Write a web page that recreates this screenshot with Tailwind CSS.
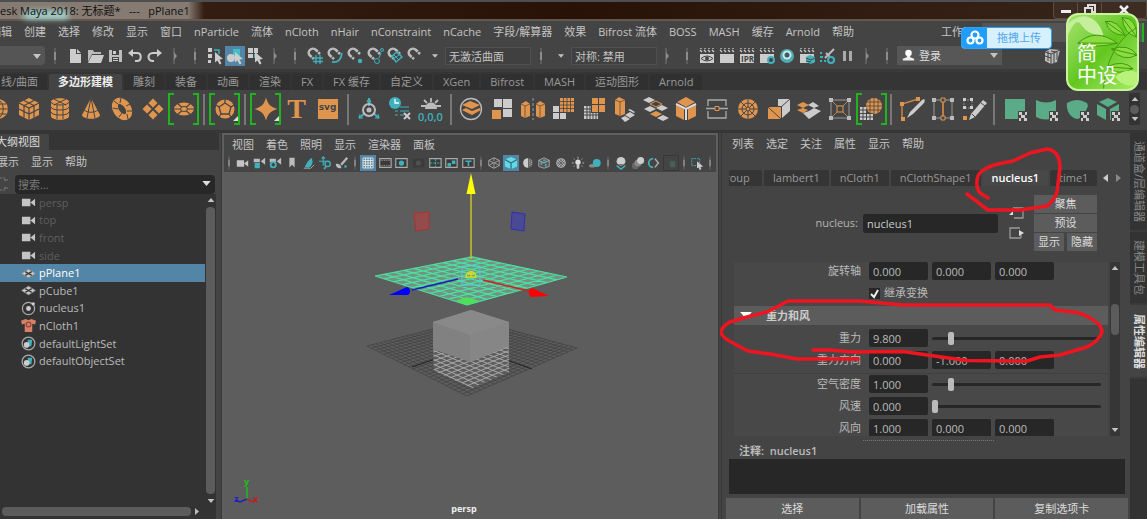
<!DOCTYPE html>
<html lang="zh-CN">
<head>
    <meta charset="UTF-8">
    <meta name="viewport" content="width=device-width, initial-scale=1.0">
    <title>Autodesk Maya 2018: 无标题* --- pPlane1</title>
    <script src="https://cdn.jsdelivr.net/npm/@tailwindcss/browser@4"></script>
</head>
<body class="flex h-screen flex-col overflow-hidden bg-[#444] font-['Open_Sans','Noto_Sans_CJK_SC',sans-serif] text-[11px] leading-4 text-[#c4c4c4]">

    <!-- Icon sprite -->
    <svg class="hidden" aria-hidden="true">
        <defs>
            <!-- status line, 20x20 -->
            <symbol id="sep" viewBox="0 0 8 20"><path d="M4 2v16" stroke="#666" stroke-width="1.5"/><path d="M4 6v8" stroke="#8c8c8c" stroke-width="2"/></symbol>
            <symbol id="sepR" viewBox="0 0 8 20"><path d="M3 2v16" stroke="#666" stroke-width="1.5"/><path d="M3 6l3 4-3 4z" fill="#8c8c8c"/></symbol>
            <symbol id="down" viewBox="0 0 10 6"><path d="M0 0h10L5 6z" fill="currentColor"/></symbol>
            <symbol id="new" viewBox="0 0 20 20"><path d="M5 3h6v5h5v9H5z" fill="#ccc"/><path d="M12 3l4 4h-4z" fill="#ccc"/></symbol>
            <symbol id="open" viewBox="0 0 20 20"><path d="M3 16V4h5l1 2h7v2H7z" fill="#bbb"/><path d="M7 9h12l-3 8H3z" fill="#ccc"/></symbol>
            <symbol id="save" viewBox="0 0 20 20"><path d="M4 4h13v12H4z" fill="#bdbdbd"/><path d="M7 4h7v5H7zM7 11h7v5H7z" fill="#444"/><path d="M8 5h3v3H8zM8 12h5v1H8zM8 14h5v1H8z" fill="#ccc"/></symbol>
            <symbol id="undo" viewBox="0 0 20 20"><path d="M4 7h8c5 0 5 8 0 8h-2" fill="none" stroke="#ccc" stroke-width="2"/><path d="M8 3v8L3 7z" fill="#ccc"/></symbol>
            <symbol id="redo" viewBox="0 0 20 20"><path d="M15 7H8c-6 0-6 8 0 8h1" fill="none" stroke="#ccc" stroke-width="2"/><path d="M12 3v8l5-4z" fill="#ccc"/></symbol>
            <symbol id="cursor" viewBox="0 0 20 20"><path d="M10 6l8 7-3.500.5 2 4-2 1-2-4-2.500 2z" fill="#ccc"/></symbol>
            <symbol id="selH" viewBox="0 0 20 20"><path d="M3 2h4v4H3zM3 8h4v4H3zM3 14h3v3H3z" fill="#ccc"/><path d="M9 4h5v4" fill="none" stroke="#3fb1bd" stroke-width="1.500"/><use href="#cursor"/></symbol>
            <symbol id="selO" viewBox="0 0 20 20"><path d="M8 3h7v8H8z" fill="#3fc0c9"/><circle cx="6" cy="12" r="4" fill="#ccc"/><use href="#cursor"/></symbol>
            <symbol id="selC" viewBox="0 0 20 20"><path d="M3 2h5v5H3zM9 2h4v5H9zM3 8h5v4H3z" fill="#ccc"/><path d="M9 8h4v4H9z" fill="#3fb1bd"/><use href="#cursor"/></symbol>
            <symbol id="magnet" viewBox="0 0 20 20"><path d="M9 13L5 9.500C1 6 7 0 11 4l4 4" fill="none" stroke="#bbb" stroke-width="2.500"/><path d="M6 12.500l2.500-3M11.500 7l3-2" stroke="#444" stroke-width="1"/></symbol>
            <symbol id="magGrid" viewBox="0 0 20 20"><use href="#magnet"/><path d="M11 9v9M15 9v9M8 12h10M8 15.500h10" stroke="#3fb1bd" stroke-width="1.300"/></symbol>
            <symbol id="magCurve" viewBox="0 0 20 20"><use href="#magnet"/><path d="M7 16c7 1 9-3 10-9" fill="none" stroke="#3fb1bd" stroke-width="1.800"/></symbol>
            <symbol id="magDot" viewBox="0 0 20 20"><use href="#magnet"/><circle cx="15" cy="15" r="2.200" fill="#3fb1bd"/></symbol>
            <symbol id="magCir" viewBox="0 0 20 20"><use href="#magnet"/><g fill="none" stroke="#3fb1bd"><circle cx="12" cy="15" r="2.500"/><circle cx="17" cy="4" r="1.500"/><path d="M14 12l2-5"/></g></symbol>
            <symbol id="magPlane" viewBox="0 0 20 20"><use href="#magnet"/><path d="M7 10l5-4 5 5-6 5z" fill="none" stroke="#3fb1bd" stroke-width="1.500"/><path d="M9 9l5 5M8 13l6-4" stroke="#3fb1bd"/></symbol>
            <symbol id="clap" viewBox="0 0 20 20"><path d="M3 8h14v9H3z" fill="#ccc"/><path d="M3 4l2 2M7 4l2 2M11 4l2 2M15 4l2 2M4 2v1M8 2v1M12 2v1M16 2v1" stroke="#ccc" stroke-width="1.300"/></symbol>
            <symbol id="clapEye" viewBox="0 0 20 20"><use href="#clap"/><path d="M4 12.500q6-5 12 0q-6 5-12 0z" fill="none" stroke="#444"/><circle cx="10" cy="12.500" r="2" fill="#444"/></symbol>
            <symbol id="clapGear" viewBox="0 0 20 20"><use href="#clap"/><circle cx="14" cy="14" r="3" fill="#444" stroke="#3fb1bd" stroke-width="2"/></symbol>
            <symbol id="clapLay" viewBox="0 0 20 20"><use href="#clap"/><path d="M9 11l4-2 5 2v5l-4 2-5-2z" fill="#3fb1bd"/><path d="M9 12l5 2 4-2M9 15l5 1" stroke="#444" fill="none"/></symbol>
            <symbol id="ring" viewBox="0 0 20 20"><circle cx="10" cy="10" r="7" fill="#4fa9b3"/><circle cx="10" cy="9" r="4.500" fill="#cfe6e8"/><circle cx="10" cy="9" r="2.500" fill="#2f5f66"/></symbol>
            <symbol id="hyper" viewBox="0 0 20 20"><path d="M8 12l9-9M9 7l4 4" stroke="#bbb" stroke-width="2"/><circle cx="14" cy="14" r="3" fill="none" stroke="#3fb1bd" stroke-width="2"/><path d="M3 7h2M3 11h3M3 15h2M7 15h2" stroke="#3fb1bd" stroke-width="2"/></symbol>
            <symbol id="pause" viewBox="0 0 20 20"><path d="M6 5h3v10H6zM12 5h3v10h-3z" fill="#aaa"/></symbol>
            <symbol id="user" viewBox="0 0 16 16"><circle cx="8" cy="5" r="4" fill="#fff"/><path d="M6 8h4v2l5 2v2H1v-2l5-2z" fill="#eee"/></symbol>
            <symbol id="modkit" viewBox="0 0 20 20"><path d="M3 6l5-3 10 1-3 12-6 2-6-3z" fill="#bbb"/><path d="M3 6l6 2v10M9 8l9-4M3 10l6 2M6 5v10M12 7v10M15 6v8M9 5l5 1" stroke="#444" stroke-width="1" fill="none"/></symbol>

            <!-- shelf, 28x28 -->
            <symbol id="sphere" viewBox="0 0 28 28"><circle cx="14" cy="14" r="10" fill="#e0954f"/><path d="M4 14h20M6 9h16M6 19h16M14 4v20M14 4c-7 5-7 15 0 20M14 4c7 5 7 15 0 20" fill="none" stroke="#444"/></symbol>
            <symbol id="cube" viewBox="0 0 28 28"><path d="M14 3l10 5v12l-10 5-10-5V8z" fill="#e0954f"/><path d="M4 8l10 5 10-5M14 13v12M4 14l10 5 10-5M9 5.500l10 5v12M19 5.500l-10 5v12" fill="none" stroke="#444" stroke-width="1.200"/></symbol>
            <symbol id="cyl" viewBox="0 0 28 28"><path d="M5 7c0-5 18-5 18 0v14c0 5-18 5-18 0z" fill="#e0954f"/><path d="M5 7c0 4 18 4 18 0M5 12c0 4 18 4 18 0M5 17c0 4 18 4 18 0M11 10v14M17 10v14M8 4l12 6M20 4L8 10" fill="none" stroke="#444"/></symbol>
            <symbol id="cone" viewBox="0 0 28 28"><path d="M14 3l9 17c-1 5-17 5-18 0z" fill="#e0954f"/><path d="M14 3l-4 20M14 3l4 20M7 15c4 3 10 3 14 0" fill="none" stroke="#444"/></symbol>
            <symbol id="torus" viewBox="0 0 28 28"><ellipse cx="14" cy="14" rx="6" ry="9" transform="rotate(-35 14 14)" fill="none" stroke="#e0954f" stroke-width="6"/><path d="M6 6l4 3M13 3l-1 5M5 13l5 1M22 9l-4 2M11 22l3-4M20 24l-1-5M24 16l-5 0" stroke="#444"/></symbol>
            <symbol id="plane" viewBox="0 0 28 28"><path d="M14 3.500L24.500 14 14 24.500 3.500 14z" fill="#e0954f"/><path d="M8.500 8.500l11 11M19.500 8.500l-11 11" stroke="#444" stroke-width="1.800"/></symbol>
            <symbol id="disc" viewBox="0 0 28 28"><ellipse cx="14" cy="14" rx="10" ry="6.500" fill="#e0954f"/><path d="M4 14h20M8 9l12 10M20 9L8 19" stroke="#444" stroke-width="1.200"/><ellipse cx="14" cy="14" rx="3.500" ry="2.500" fill="#e0954f" stroke="#444"/></symbol>
            <symbol id="soccer" viewBox="0 0 28 28"><circle cx="14" cy="14" r="9.500" fill="#e0954f"/><path d="M14 8l6 4-2 7h-8l-2-7zM14 8V4M20 12l3-2M18 19l2 3M10 19l-2 3M8 12l-3-2" fill="none" stroke="#444" stroke-width="1.300"/></symbol>
            <symbol id="corner" viewBox="0 0 28 28"><path d="M27 21v5h-5z" fill="#ddd"/></symbol>
            <symbol id="star" viewBox="0 0 28 28"><path d="M14 2.500c2 7 4.500 9.500 11.500 11.500-7 2-9.500 4.500-11.500 11.500C12 18.500 9.500 16 2.500 14 9.500 12 12 9.500 14 2.500z" fill="#e0954f"/></symbol>
            <symbol id="rig" viewBox="0 0 28 28"><path d="M14 3v8M10 18l-6 5M18 18l6 5" stroke="#3fb1bd" stroke-width="2"/><path d="M14 3l-2 4h4zM4 23l1-4M4 23h4M24 23l-1-4M24 23h-4" fill="#3fb1bd" stroke="#3fb1bd"/><circle cx="14" cy="15" r="6" fill="none" stroke="#bbb" stroke-width="2"/><circle cx="14" cy="15" r="2.500" fill="#bbb"/></symbol>
            <symbol id="hist" viewBox="0 0 28 28"><circle cx="9" cy="8" r="6" fill="#3fb1bd"/><path d="M9 4v4h4" stroke="#fff" fill="none" stroke-width="1.300"/><path d="M14 12h9M9 16h3M14 16h9M9 20h3M14 20h4" stroke="#3fb1bd" stroke-width="1.200"/><path d="M18 18l6 6M24 18l-6 6" stroke="#ccc" stroke-width="2"/></symbol>
            <symbol id="freeze" viewBox="0 0 28 28"><path d="M9 13c0-6 10-6 10 0zM14 3v4M7 5l3 3M21 5l-3 3M4 11h5M24 11h-5" fill="#bbb" stroke="#bbb" stroke-width="1.800"/></symbol>
            <symbol id="combine" viewBox="0 0 28 28"><circle cx="14" cy="14" r="10.500" fill="none" stroke="#bbb" stroke-width="1.300"/><path d="M5 10l8-4 10 4-8 4zM5 15l4-2 6 3 8-3 1 2-9 5z" fill="#e0954f"/></symbol>
            <symbol id="separate" viewBox="0 0 28 28"><path d="M6 4h8v8H6zM15 4h9v9h-9zM15 14h9v8h-9z" fill="#ccc"/><path d="M4 15h9v9H4z" fill="#e0954f"/></symbol>
            <symbol id="mirror" viewBox="0 0 28 28"><path d="M2 9l5-3 4 3v12l-5 2-4-2zM17 9l4-3 5 3v12l-5 2-4-2z" fill="#e0954f"/><path d="M2 9l4 2 5-2M6 11v12M17 9l4 2 5-2M21 11v12" fill="none" stroke="#7a5a3a"/><path d="M14 3v22" stroke="#999" stroke-dasharray="3 2"/></symbol>
            <symbol id="smooth" viewBox="0 0 28 28"><path d="M11 3h14v14H11z" fill="#e0954f"/><path d="M14.500 3v14M18 3v14M21.500 3v14M11 6.500h14M11 10h14M11 13.500h14" stroke="#444" stroke-width=".8"/><path d="M4 11h6v6H4zM4 18h6v6H4zM11 18h6v6h-6z" fill="#ccc"/></symbol>
            <symbol id="reduce" viewBox="0 0 28 28"><path d="M12 3h6v6h-6zM19 3h6v6h-6zM19 10h6v7h-6zM12 10h6v7h-6z" fill="#e0954f"/><path d="M4 11h7v7h7v6H4z" fill="#ccc"/><path d="M7 11v13M10 11v13M13 18v6M16 18v6M4 14h7M4 17h7M4 20h14" stroke="#444"/></symbol>
            <symbol id="extrude" viewBox="0 0 28 28"><path d="M4 5l4-3 6 3v14l-5 2-5-2z" fill="#e0954f"/><path d="M4 5l5 2 5-2M9 7v14" fill="none" stroke="#7a5a3a"/><path d="M14 20l5-3 5 3-5 3zM10 23l4-2 5 3-5 3z M17 15l2-1 5 3-1 1z" fill="#ccc"/></symbol>
            <symbol id="bridge" viewBox="0 0 28 28"><path d="M1 5l6-3 6 3-6 3zM14 13l6-3 6 3-6 3zM2 14l6-3 6 3-6 3zM15 23l6-3 6 3-6 3z" fill="#ccc"/><path d="M8 9l6-3 6 3-6 3z" fill="none" stroke="#e0954f"/><path d="M8 19l6-3 6 3-6 3z" fill="#e0954f"/></symbol>
            <symbol id="bevel" viewBox="0 0 28 28"><path d="M14 2l9 5-9 5-9-5zM4 10l8 4v11l-8-4zM24 10l-8 4v11l8-4z" fill="#e0954f"/><path d="M4 9l10 5 10-5M14 14v11" fill="none" stroke="#ddd" stroke-width="2"/></symbol>
            <symbol id="cut" viewBox="0 0 28 28"><path d="M5 11V5h18v6M5 16v7h18v-7M3 13.500h22" fill="none" stroke="#aaa" stroke-width="1.300"/><path d="M12 11.500h4v4h-4z" fill="#444" stroke="#e0954f"/></symbol>
            <symbol id="wheel" viewBox="0 0 28 28"><circle cx="14" cy="14" r="10" fill="#e0954f"/><path d="M14 4v20M4 14h20M7 7l14 14M21 7L7 21" stroke="#444"/><circle cx="14" cy="14" r="6" fill="none" stroke="#444"/><circle cx="14" cy="14" r="2" fill="#e0954f" stroke="#444"/></symbol>
            <symbol id="tri" viewBox="0 0 28 28"><path d="M13 4h12v12l-8 7V11H13z" fill="#ccc"/><path d="M3 12h13v12H3z" fill="#e0954f"/><path d="M3 12l13 12M16 12l9-8" stroke="#444"/></symbol>
            <symbol id="quad" viewBox="0 0 28 28"><path d="M2 10l6-3 6 3-6 3zM2 15l6-2 5 2-5 3z" fill="#e0954f"/><path d="M13 10l5-3 6 4-5 2zM14 16l5-3 7 3-6 4zM8 18l6-2 6 4-6 4z" fill="#ccc"/></symbol>
            <symbol id="lattice" viewBox="0 0 28 28"><path d="M5 5h18v18H5z" fill="none" stroke="#999"/><path d="M6 6l16 16M22 6L6 22" stroke="#b98450"/><path d="M11 11h6v6h-6z" fill="#444" stroke="#e0954f"/><path d="M3 3h4v4H3zM21 3h4v4h-4zM3 21h4v4H3zM21 21h4v4h-4z" fill="#bbb"/></symbol>
            <symbol id="remesh" viewBox="0 0 28 28"><circle cx="17" cy="11" r="8" fill="#e0954f"/><path d="M17 3v16M9 11h16M13 4v14M21 4v14M10 7h14M10 15h14" stroke="#444" stroke-width=".8"/><path d="M3 12h6v6h7v7H3z" fill="#ccc"/><path d="M6 12v13M9.500 14v11M13 18v7M3 15h6M3 18.500h13M3 22h13" stroke="#444"/></symbol>
            <symbol id="knife" viewBox="0 0 28 28"><path d="M4 24V9l16-5" fill="none" stroke="#c8884a" stroke-width="1.400"/><path d="M2 7h4v4H2zM18 2h4v4h-4zM3 22h4v4H3z" fill="#e0954f"/><path d="M26 4c1 1 1 2 0 4L15 19l-6 4 3-6L24 5z" fill="#ccc"/></symbol>
            <symbol id="loop" viewBox="0 0 28 28"><path d="M5 5h18v18H5z" fill="none" stroke="#999"/><path d="M14 4v20" stroke="#e0954f" stroke-width="1.500"/><path d="M3 3h4v4H3zM21 3h4v4h-4zM3 21h4v4H3zM21 21h4v4h-4z" fill="#bbb"/><path d="M12 3h4v4h-4zM12 21h4v4h-4z" fill="#444" stroke="#e0954f"/></symbol>
            <symbol id="pencil" viewBox="0 0 28 28"><path d="M4 5h8v8H4z" fill="none" stroke="#888" stroke-dasharray="2 1"/><path d="M3 3h3v3H3zM10 3h3v3h-3zM3 11h3v3H3zM10 11h3v3h-3z" fill="#ccc"/><path d="M3 21h4v4H3z" fill="#e0954f"/><path d="M23 5l4 3-12 14-6 3 2-6z" fill="#ccc"/><path d="M21 8l4 3M12 19l3 3" stroke="#444"/></symbol>
            <symbol id="chk" viewBox="0 0 28 28"><path d="M17 16h9v10h-9z" fill="#444"/><path d="M18 17h3v3h3v-3h2v3h-2v3h2v3h-3v-3h-3v3h-2v-3h2v-3h-2v-3z" fill="#ccc"/></symbol>
            <symbol id="uvP" viewBox="0 0 28 28"><path d="M4 4h20v20H4z" fill="#5bab88"/><use href="#chk"/></symbol>
            <symbol id="uvC" viewBox="0 0 28 28"><path d="M4 5q10 5 20 0v17q-10 5-20 0z" fill="#5bab88"/><use href="#chk"/></symbol>
            <symbol id="uvS" viewBox="0 0 28 28"><path d="M4 8q10-6 20 0l1 3c-3 7-5 12-11 13C7 23 3 15 4 8z" fill="#5bab88"/><use href="#chk"/></symbol>
            <symbol id="uvA" viewBox="0 0 28 28"><path d="M14 3l9 4-9 5-9-5zM3 9l9 5v11l-9-5zM25 9l-9 5v11l9-5z" fill="#5bab88"/><use href="#chk"/></symbol>

            <!-- outliner and panel bar, 16x16 -->
            <symbol id="cam" viewBox="0 0 16 16"><path d="M1 4h9v8H1zM10 8l5-4v8z" fill="#c4c4c4"/></symbol>
            <symbol id="mesh" viewBox="0 0 16 16"><path d="M0 8l8-5 8 5-8 5z" fill="#999"/><path d="M1.500 8l6.500-4 6.500 4L8 12z" fill="#c9c9c9"/><path d="M4.500 6l7 4M11.500 6l-7 4" stroke="#3a3a3a" stroke-width="1.300"/></symbol>
            <symbol id="nuc" viewBox="0 0 16 16"><circle cx="8" cy="8" r="6.500" fill="none" stroke="#aaa" stroke-width="1.300"/><circle cx="8" cy="8" r="2.600" fill="#ccc"/><circle cx="13" cy="3" r="1.800" fill="#ccc"/></symbol>
            <symbol id="shirt" viewBox="0 0 16 16"><path d="M0 3l5-2q3 2 6 0l5 2-1 4-3-1v9H4V6L1 7z" fill="#d97f68"/><circle cx="8" cy="7" r="2.500" fill="none" stroke="#8b4a3d" stroke-width="1.300"/></symbol>
            <symbol id="set" viewBox="0 0 16 16"><circle cx="8" cy="8" r="6.800" fill="none" stroke="#aaa" stroke-width="1.300"/><path d="M7 4h5l-1 7H8z" fill="#3fb1bd"/><circle cx="6" cy="9.500" r="3" fill="#ccc"/></symbol>
            <symbol id="camL" viewBox="0 0 16 16"><path d="M2 3h7v4H2zM10 6l5-4v8z" fill="#bbb"/><path d="M3 8h6v6H3z" fill="#3fb1bd"/></symbol>
            <symbol id="camG" viewBox="0 0 16 16"><path d="M2 3h7v4H2zM10 6l5-4v8z" fill="#bbb"/><circle cx="6" cy="10" r="3" fill="#444" stroke="#3fb1bd" stroke-width="2"/></symbol>
            <symbol id="mark" viewBox="0 0 16 16"><path d="M5 2h6v11l-3-3-3 3z" fill="#bbb"/></symbol>
            <symbol id="img" viewBox="0 0 16 16"><path d="M3 13C5 8 8 4 11 2c2 5 1 9-3 11z" fill="#3fb1bd"/><path d="M2 14h8l4-4" stroke="#aaa" fill="none"/></symbol>
            <symbol id="pan" viewBox="0 0 16 16"><path d="M1 6h9M6 1v10M4 3l2-2 2 2" stroke="#3fb1bd" stroke-width="1.300" fill="none"/><circle cx="11" cy="9" r="3" fill="#444" stroke="#3fb1bd" stroke-width="1.500"/><path d="M9 12l-2 3" stroke="#3fb1bd" stroke-width="2"/></symbol>
            <symbol id="brush" viewBox="0 0 16 16"><path d="M14 2L7 10" stroke="#bbb" stroke-width="2.500"/><path d="M1 9c3-1 7 2 6 5-3 0-6-1-6-5z" fill="#bbb"/><circle cx="12" cy="12" r="1.500" fill="#3fb1bd"/></symbol>
            <symbol id="frame" viewBox="0 0 16 16"><path d="M2 3h13v10H2z" fill="#3a3a3a" stroke="#aaa" stroke-width="1.300"/></symbol>
            <symbol id="grid" viewBox="0 0 16 16"><path d="M3 3h10v10H3zM5.500 3v10M8 3v10M10.500 3v10M3 5.500h10M3 8h10M3 10.500h10" fill="none" stroke="#ddd"/></symbol>
            <symbol id="film" viewBox="0 0 16 16"><use href="#frame"/><path d="M3 5h11M3 11h11" stroke="#aaa" stroke-dasharray="1 1"/></symbol>
            <symbol id="res" viewBox="0 0 16 16"><use href="#frame"/><circle cx="8.500" cy="8" r="3" fill="#3fb1bd"/></symbol>
            <symbol id="mask" viewBox="0 0 16 16"><path d="M2 3h13v10H2z" fill="#3b3b3b"/><circle cx="8.500" cy="8" r="3" fill="#505050"/></symbol>
            <symbol id="chart" viewBox="0 0 16 16"><use href="#frame"/><path d="M2 8h13M8.500 3v10" stroke="#3fb1bd" stroke-dasharray="3 1"/></symbol>
            <symbol id="safe" viewBox="0 0 16 16"><use href="#frame"/><path d="M4 8h4v4H4zM9 5h4v4H9z" fill="#3fb1bd"/></symbol>
            <symbol id="title" viewBox="0 0 16 16"><use href="#frame"/><path d="M5 6h7M8.500 5.500v6" stroke="#3fb1bd" stroke-width="1.800"/></symbol>
            <symbol id="wire" viewBox="0 0 16 16"><path d="M8 2l6 3v6l-6 3-6-3V5zM2 5l6 3 6-3M8 8v6M8 2v4M2 11l5-3M14 11L9 8" fill="none" stroke="#aaa"/></symbol>
            <symbol id="shade" viewBox="0 0 16 16"><path d="M8 1l7 3v8l-7 3-7-3V4z" fill="#66d9e0"/><path d="M1 4l7 4 7-4M8 8v7" fill="none" stroke="#2b6f86" stroke-width="1.400"/></symbol>
            <symbol id="half" viewBox="0 0 16 16"><circle cx="8" cy="8" r="5.500" fill="#666"/><path d="M8 2.500a5.500 5.500 0 000 11z" fill="#ccc"/><path d="M10 4v8M12 5v6" stroke="#bbb" stroke-dasharray="1 1"/></symbol>
            <symbol id="tex" viewBox="0 0 16 16"><path d="M8 2l6 3v7l-6 2-6-2V5z" fill="#555" stroke="#aaa"/><path d="M4 7h2v3H4zM9 9h2v3H9zM7 4h3v2H7z" fill="#3fb1bd"/><path d="M2 5l6 3 6-3" fill="none" stroke="#bbb"/></symbol>
            <symbol id="check" viewBox="0 0 16 16"><circle cx="8" cy="8" r="5.500" fill="#bbb"/><path d="M4 4l8 8M6 3l7 7M3 6l7 7M12 4l-8 8M10 3l-7 7M13 6l-7 7" stroke="#555"/></symbol>
            <symbol id="bulb" viewBox="0 0 16 16"><circle cx="8" cy="7" r="3" fill="#ddd"/><path d="M7 10h2v4H7zM8 1v2M3 3l1 1M13 3l-1 1M1 8h2M13 8h2M3 12l1-1M13 12l-1-1" fill="#ddd" stroke="#ccc"/></symbol>
            <symbol id="shadow" viewBox="0 0 16 16"><ellipse cx="5" cy="11" rx="4" ry="2" fill="#888"/><circle cx="10" cy="8" r="4.500" fill="#3fb1bd"/></symbol>
            <symbol id="ao" viewBox="0 0 16 16"><path d="M3 11l5 4 5-4" fill="none" stroke="#3fb1bd" stroke-width="1.500"/><circle cx="8" cy="6" r="5" fill="#ccc"/><path d="M4 9a5 5 0 008 0z" fill="#777"/></symbol>
            <symbol id="blur" viewBox="0 0 16 16"><circle cx="5" cy="11" r="4" fill="#666"/><circle cx="8" cy="8" r="4" fill="#888"/><circle cx="11" cy="5" r="4" fill="#ccc"/></symbol>
            <symbol id="aa" viewBox="0 0 16 16"><path d="M7 3a5 5 0 000 10" fill="none" stroke="#3fb1bd" stroke-width="2"/><path d="M9 3l4 5-4 5" fill="none" stroke="#aaa" stroke-width="1.800"/></symbol>
            <symbol id="dof" viewBox="0 0 16 16"><path d="M3 3h7v7H3z" fill="#3d4a4a"/><path d="M7 6h6v7H7z" fill="#4a5c5b"/></symbol>
            <symbol id="iso" viewBox="0 0 16 16"><path d="M2 3h9v8H2z" fill="none" stroke="#3fb1bd" stroke-dasharray="2 1"/><path d="M8 6l7 6-3 .5 1 2.500-2 1-1-3-2 1z" fill="#ccc"/></symbol>
        </defs>
    </svg>

    <!-- Title bar -->
    <header class="relative flex h-[21px] shrink-0 items-center justify-between border-t-2 border-b-2 border-t-[#4c4e50] border-b-[#64584e] bg-linear-to-r from-[#3a2418] via-[#281206] to-[#38261b]">
        <div class="absolute inset-y-0 left-0 w-[188px] bg-[#857b72]"></div>
        <div class="absolute inset-y-0 left-[188px] w-4 bg-linear-to-r from-[#857b72] to-transparent"></div>
        <div class="absolute bottom-0 left-6 h-2 w-11 bg-[#a5dcd9] blur-[3px]"></div>
        <h1 class="relative whitespace-pre text-[#111]">esk Maya 2018: 无标题*   ---   pPlane1</h1>
        <div class="relative flex h-full divide-x divide-[#5c4c42] rounded-b border border-t-0 border-[#5c4c42] bg-[#3e2c22]">
            <button class="grid w-6 place-items-center" aria-label="最小化"><svg class="h-3 w-3" viewBox="0 0 12 12"><path d="M1 6h10v3H1z" fill="#eee"/></svg></button>
            <button class="grid w-6 place-items-center" aria-label="还原"><svg class="h-3 w-3" viewBox="0 0 12 12"><path d="M4 4V1h7v7H8M1 4h7v7H1z" fill="none" stroke="#ddd" stroke-width="2"/></svg></button>
            <button class="grid w-11 place-items-center" aria-label="关闭"><svg class="h-3 w-3" viewBox="0 0 12 12"><path d="M2 2l8 8M10 2l-8 8" stroke="#eee" stroke-width="2.500"/></svg></button>
        </div>
    </header>

    <!-- Main menu -->
    <nav class="relative flex h-[22px] shrink-0 items-center gap-3 whitespace-nowrap">
        <a href="#" class="-ml-[10px]">编辑</a>
        <a href="#">创建</a>
        <a href="#">选择</a>
        <a href="#">修改</a>
        <a href="#">显示</a>
        <a href="#">窗口</a>
        <a href="#">nParticle</a>
        <a href="#">流体</a>
        <a href="#">nCloth</a>
        <a href="#">nHair</a>
        <a href="#">nConstraint</a>
        <a href="#">nCache</a>
        <a href="#">字段/解算器</a>
        <a href="#">效果</a>
        <a href="#">Bifrost 流体</a>
        <a href="#">BOSS</a>
        <a href="#">MASH</a>
        <a href="#">缓存</a>
        <a href="#">Arnold</a>
        <a href="#">帮助</a>
        <label for="workspace" class="ml-auto">工作区</label>
        <div class="mr-[3px] -ml-1 h-[19px] w-[162px] border-r-2 border-[#1fb41f] bg-[#555]">
            <select id="workspace" class="h-full w-full appearance-none" aria-label="工作区"><option></option></select>
        </div>

        <!-- Upload badge and input method logo float above the window -->
        <button class="absolute top-[6px] right-[95px] z-10 flex h-[22px] w-[91px] items-center overflow-hidden rounded-sm border border-[#2aa4fb] bg-[#d6f0fd] text-[#50a6ee]">
            <span class="grid h-full w-[25px] shrink-0 place-items-center bg-[#1e9dfb]">
                <svg class="h-4 w-[18px]" viewBox="0 0 18 16" fill="none" stroke="#fff" stroke-width="2.200"><circle cx="9" cy="5" r="3.500"/><circle cx="4.500" cy="10.500" r="3"/><circle cx="13.500" cy="10.500" r="3"/></svg>
            </span>
            <span class="flex-1">拖拽上传</span>
        </button>
        <div class="absolute -top-2 right-2 z-10 h-[78px] w-[73px] overflow-hidden rounded-xl border-2 border-[#c9f59a] bg-linear-to-br from-[#a7e36b] via-[#62c71b] to-[#a8ec64]">
            <svg class="absolute inset-0 h-full w-full" viewBox="0 0 70 74" fill="none">
                <path d="M0 8Q12-2 22 2T36 20Q20 20 14 10T0 20z" fill="#c5ef9d"/>
                <path d="M10 28Q28 12 50 28 28 34 10 28zM38 6Q50 4 58 20 42 20 38 6zM55 2Q70 2 70 22 56 18 55 2zM44 34Q62 28 70 40 56 48 44 34zM40 52Q56 44 66 54 50 62 40 52z" fill="#8bdc3f" stroke="#3f9912"/>
                <path d="M10 28h40M38 6l20 14M55 2l15 20M44 34l26 6M40 52l26 2M70 12Q40 30 36 74" stroke="#3f9912"/>
                <path d="M48 62q12-10 22-4v12q-14 4-22-8z" fill="#b9f27a"/>
            </svg>
            <p class="absolute top-7 left-[9px] text-[20px] leading-[22px] text-white">简<br>中设</p>
        </div>
    </nav>

    <!-- Status line -->
    <div class="flex h-[27px] shrink-0 items-center border-b border-[#393939] pb-px [&>button]:grid [&>button]:h-5 [&>button]:w-5 [&>button]:shrink-0 [&>button]:place-items-center [&>svg]:h-5 [&>svg]:w-5 [&>svg]:shrink-0">
        <div class="relative h-[19px] w-[45px] shrink-0 rounded-r-sm bg-[#555]">
            <select class="h-full w-full appearance-none" aria-label="菜单集"><option></option></select>
            <svg class="pointer-events-none absolute top-2 right-1 h-[5px] w-2"><use href="#down"/></svg>
        </div>
        <svg><use href="#sep"/></svg>
        <button aria-label="新建场景"><svg class="h-5 w-5"><use href="#new"/></svg></button>
        <button aria-label="打开场景"><svg class="h-5 w-5"><use href="#open"/></svg></button>
        <button aria-label="保存场景"><svg class="h-5 w-5"><use href="#save"/></svg></button>
        <button aria-label="撤消"><svg class="h-5 w-5"><use href="#undo"/></svg></button>
        <button aria-label="重做"><svg class="h-5 w-5"><use href="#redo"/></svg></button>
        <svg><use href="#sepR"/></svg>
        <svg><use href="#sep"/></svg>
        <button aria-label="按层次选择"><svg class="h-5 w-5"><use href="#selH"/></svg></button>
        <button aria-label="按对象选择" class="bg-[#5285a6]"><svg class="h-5 w-5"><use href="#selO"/></svg></button>
        <button aria-label="按组件选择"><svg class="h-5 w-5"><use href="#selC"/></svg></button>
        <svg><use href="#sepR"/></svg>
        <svg><use href="#sep"/></svg>
        <button aria-label="捕捉到栅格"><svg class="h-5 w-5"><use href="#magGrid"/></svg></button>
        <button aria-label="捕捉到曲线"><svg class="h-5 w-5"><use href="#magCurve"/></svg></button>
        <button aria-label="捕捉到点"><svg class="h-5 w-5"><use href="#magDot"/></svg></button>
        <button aria-label="捕捉到投影中心"><svg class="h-5 w-5"><use href="#magCir"/></svg></button>
        <button aria-label="捕捉到视图平面"><svg class="h-5 w-5"><use href="#magPlane"/></svg></button>
        <button aria-label="激活选定对象"><svg class="h-5 w-5"><use href="#magnet"/></svg></button>
        <button aria-label="激活列表"><svg class="h-1 w-[6px]"><use href="#down"/></svg></button>
        <input class="h-[18px] w-[86px] shrink-0 border border-[#505050] bg-[#404040] px-[3px]" value="无激活曲面" aria-label="激活曲面">
        <svg><use href="#sep"/></svg>
        <button aria-label="对称列表"><svg class="h-1 w-[6px]"><use href="#down"/></svg></button>
        <input class="h-[18px] w-[86px] shrink-0 border border-[#505050] bg-[#404040] px-[3px]" value="对称: 禁用" aria-label="对称">
        <svg><use href="#sepR"/></svg>
        <svg><use href="#sep"/></svg>
        <button aria-label="渲染视图"><svg class="h-5 w-5"><use href="#clapEye"/></svg></button>
        <button aria-label="渲染当前帧"><svg class="h-5 w-5"><use href="#clap"/></svg></button>
        <button aria-label="IPR 渲染" class="relative"><svg class="h-5 w-5"><use href="#clap"/></svg><span class="absolute bottom-[3px] left-1 text-[8px] leading-2 font-bold text-[#444]">IPR</span></button>
        <button aria-label="渲染设置"><svg class="h-5 w-5"><use href="#clapGear"/></svg></button>
        <button aria-label="Hypershade"><svg class="h-5 w-5"><use href="#ring"/></svg></button>
        <button aria-label="渲染设置编辑器"><svg class="h-5 w-5"><use href="#clapLay"/></svg></button>
        <button aria-label="灯光编辑器"><svg class="h-5 w-5"><use href="#hyper"/></svg></button>
        <button aria-label="暂停"><svg class="h-5 w-5"><use href="#pause"/></svg></button>
        <svg><use href="#sepR"/></svg>
        <svg><use href="#sep"/></svg>
        <div class="relative h-[19px] w-[105px] shrink-0 bg-[#575757]">
            <svg class="pointer-events-none absolute top-[3px] left-[5px] h-[13px] w-[13px]"><use href="#user"/></svg>
            <select class="h-full w-full appearance-none pl-[22px] text-[#ddd]" aria-label="登录"><option>登录</option></select>
            <svg class="pointer-events-none absolute top-[7px] right-1 h-[5px] w-2"><use href="#down"/></svg>
        </div>
        <button aria-label="建模工具包" class="mr-[85px] ml-auto"><svg class="h-5 w-5"><use href="#modkit"/></svg></button>
    </div>

    <!-- Shelf tabs -->
    <div class="flex h-5 shrink-0 items-end gap-[2px] border-t-2 border-[#3a3a3a] bg-[#353535] whitespace-nowrap text-[#999] [&>button]:h-4 [&>button]:rounded-t-xs [&>button]:bg-[#303030] [&>button]:px-[9px]">
        <button class="-ml-2">线/曲面</button>
        <button class="!bg-[#444] font-semibold text-[#eee]">多边形建模</button>
        <button>雕刻</button>
        <button>装备</button>
        <button>动画</button>
        <button>渲染</button>
        <button>FX</button>
        <button>FX 缓存</button>
        <button>自定义</button>
        <button>XGen</button>
        <button>Bifrost</button>
        <button>MASH</button>
        <button>运动图形</button>
        <button>Arnold</button>
    </div>

    <!-- Shelf -->
    <div class="flex h-[38px] shrink-0 items-center [&_button]:grid [&_button]:h-8 [&_button]:w-[31px] [&_button]:shrink-0 [&_button]:place-items-center [&>i]:mx-1 [&>i]:h-[31px] [&>i]:w-[2px] [&>i]:shrink-0 [&>i]:bg-[#777]">
        <button class="-ml-[18px]" aria-label="球体"><svg class="h-7 w-7"><use href="#sphere"/></svg></button>
        <button aria-label="立方体"><svg class="h-7 w-7"><use href="#cube"/></svg></button>
        <button aria-label="圆柱体"><svg class="h-7 w-7"><use href="#cyl"/></svg></button>
        <button aria-label="圆锥体"><svg class="h-7 w-7"><use href="#cone"/></svg></button>
        <button aria-label="圆环"><svg class="h-7 w-7"><use href="#torus"/></svg></button>
        <button aria-label="平面"><svg class="h-7 w-7"><use href="#plane"/></svg></button>
        <button aria-label="圆盘" class="relative"><svg class="absolute inset-0 h-8 w-[31px]" viewBox="0 0 31 32" fill="none" stroke="#1fb41f" stroke-width="2"><path d="M6 1H1v30h5M25 1h5v30h-5"/></svg><svg class="h-7 w-7"><use href="#disc"/></svg></button>
        <i></i>
        <button aria-label="柏拉图多面体" class="relative"><svg class="absolute inset-0 h-8 w-[31px]" viewBox="0 0 31 32" fill="none" stroke="#1fb41f" stroke-width="2"><path d="M6 1H1v30h5M25 1h5v30h-5"/></svg><svg class="h-7 w-7"><use href="#soccer"/><use href="#corner"/></svg></button>
        <i></i>
        <button aria-label="超形状" class="relative"><svg class="absolute inset-0 h-8 w-[31px]" viewBox="0 0 31 32" fill="none" stroke="#1fb41f" stroke-width="2"><path d="M6 1H1v30h5M25 1h5v30h-5"/></svg><svg class="h-7 w-7"><use href="#star"/><use href="#corner"/></svg></button>
        <button aria-label="文字" class="font-['Liberation_Serif'] text-[28px] leading-7 font-bold text-[#e0954f]">T</button>
        <button aria-label="SVG"><span class="grid h-5 w-5 place-items-center bg-[#e0954f] pb-1 font-['DejaVu_Sans'] text-[9px] leading-4 font-bold text-[#444]">svg</span></button>
        <i></i>
        <button aria-label="中心枢轴"><svg class="h-7 w-7"><use href="#rig"/></svg></button>
        <button aria-label="删除历史"><svg class="h-7 w-7"><use href="#hist"/></svg></button>
        <button aria-label="冻结变换" class="relative"><svg class="h-7 w-7"><use href="#freeze"/></svg><span class="absolute bottom-0 left-[3px] text-[11px] leading-4 font-semibold text-[#3fb1bd]">0,0,0</span></button>
        <i></i>
        <div class="flex w-[430px] shrink-0 justify-between [&>button]:!w-[30px]">
            <button aria-label="结合"><svg class="h-7 w-7"><use href="#combine"/></svg></button>
            <button aria-label="分离"><svg class="h-7 w-7"><use href="#separate"/></svg></button>
            <button aria-label="镜像"><svg class="h-7 w-7"><use href="#mirror"/></svg></button>
            <button aria-label="平滑"><svg class="h-7 w-7"><use href="#smooth"/></svg></button>
            <button aria-label="减少"><svg class="h-7 w-7"><use href="#reduce"/></svg></button>
            <button aria-label="挤出"><svg class="h-7 w-7"><use href="#extrude"/></svg></button>
            <button aria-label="桥接"><svg class="h-7 w-7"><use href="#bridge"/></svg></button>
            <button aria-label="倒角"><svg class="h-7 w-7"><use href="#bevel"/></svg></button>
            <button aria-label="收拢"><svg class="h-7 w-7"><use href="#cut"/></svg></button>
            <button aria-label="圆形圆角"><svg class="h-7 w-7"><use href="#wheel"/></svg></button>
            <button aria-label="三角化"><svg class="h-7 w-7"><use href="#tri"/></svg></button>
            <button aria-label="四边形化"><svg class="h-7 w-7"><use href="#quad"/></svg></button>
            <button aria-label="晶格"><svg class="h-7 w-7"><use href="#lattice"/></svg></button>
            <button aria-label="重新拓扑" class="relative"><svg class="absolute inset-0 h-8 w-[31px]" viewBox="0 0 31 32" fill="none" stroke="#1fb41f" stroke-width="2"><path d="M6 1H1v30h5M25 1h5v30h-5"/></svg><svg class="h-7 w-7"><use href="#remesh"/></svg></button>
        </div>
        <i></i>
        <button aria-label="多切割"><svg class="h-7 w-7"><use href="#knife"/></svg></button>
        <button aria-label="插入循环边"><svg class="h-7 w-7"><use href="#loop"/></svg></button>
        <button aria-label="四边形绘制"><svg class="h-7 w-7"><use href="#pencil"/></svg></button>
        <i></i>
        <button aria-label="平面映射"><svg class="h-7 w-7"><use href="#uvP"/></svg></button>
        <button aria-label="圆柱形映射"><svg class="h-7 w-7"><use href="#uvC"/></svg></button>
        <button aria-label="球形映射"><svg class="h-7 w-7"><use href="#uvS"/></svg></button>
        <button aria-label="自动映射"><svg class="h-7 w-7"><use href="#uvA"/></svg></button>
        <div class="mr-[7px] ml-auto flex h-8 w-[11px] flex-col items-center justify-between bg-[#333] py-1">
            <svg class="h-1 w-2 rotate-180"><use href="#down"/></svg>
            <span class="h-[9px] w-[9px] rounded-full bg-[#5c5c5c]"></span>
            <svg class="h-1 w-2"><use href="#down"/></svg>
        </div>
    </div>

    <main class="mt-[2px] flex min-h-0 flex-1 border-t-[3px] border-[#363636]">

        <!-- Outliner -->
        <section class="flex w-[219px] shrink-0 flex-col">
            <div class="flex h-[17px] items-end bg-[#353535]"><h2 class="h-4 w-[49px] bg-[#444] whitespace-nowrap text-[#ddd]"><span class="-ml-1">大纲视图</span></h2></div>
            <nav class="flex h-[24px] items-center gap-3">
                <a href="#" class="-ml-[3px]">展示</a>
                <a href="#">显示</a>
                <a href="#">帮助</a>
            </nav>
            <div class="flex h-[20px] items-center">
                <svg class="mr-1 h-4 w-[11px]" viewBox="0 0 11 16" fill="none" stroke="#777"><path d="M0 2h5v3M0 14h5v-3" stroke-dasharray="2 1"/><path d="M4 4h4M4 12h4"/></svg>
                <div class="relative h-[19px] w-[200px] rounded-sm bg-[#272727]">
                    <input class="h-full w-full px-[3px] text-[#999] placeholder:text-[#777]" placeholder="搜索..." aria-label="搜索">
                    <svg class="absolute top-[6px] right-1 h-[5px] w-[9px] text-[#ddd]"><use href="#down"/></svg>
                </div>
            </div>
            <div class="flex min-h-0 flex-1 bg-[#333]">
                <div class="flex min-w-0 flex-1 flex-col justify-between">
                    <ul class="grid h-[176px] grid-rows-10 text-[#bbb] [&>li]:flex [&>li]:items-center [&>li]:gap-[3px] [&>li]:pl-[21px]">
                        <li class="text-[#5e5e5e]"><svg class="h-[15px] w-[15px]"><use href="#cam"/></svg>persp</li>
                        <li class="text-[#5e5e5e]"><svg class="h-[15px] w-[15px]"><use href="#cam"/></svg>top</li>
                        <li class="text-[#5e5e5e]"><svg class="h-[15px] w-[15px]"><use href="#cam"/></svg>front</li>
                        <li class="text-[#5e5e5e]"><svg class="h-[15px] w-[15px]"><use href="#cam"/></svg>side</li>
                        <li class="bg-[#5285a6] text-white"><svg class="h-[15px] w-[15px]"><use href="#mesh"/></svg>pPlane1</li>
                        <li><svg class="h-[15px] w-[15px]"><use href="#mesh"/></svg>pCube1</li>
                        <li><svg class="h-[15px] w-[15px]"><use href="#nuc"/></svg>nucleus1</li>
                        <li><svg class="h-[15px] w-[15px]"><use href="#shirt"/></svg>nCloth1</li>
                        <li><svg class="h-[15px] w-[15px]"><use href="#set"/></svg>defaultLightSet</li>
                        <li><svg class="h-[15px] w-[15px]"><use href="#set"/></svg>defaultObjectSet</li>
                    </ul>
                    <div class="mb-[3px] flex items-center gap-1 pl-[2px]">
                        <div class="h-[9px] flex-1 rounded-sm bg-[#5c5c5c]"></div>
                        <svg class="h-[7px] w-1" viewBox="0 0 4 7"><path d="M0 0l4 3.500L0 7z" fill="#bbb"/></svg>
                        <span class="w-[2px]"></span>
                    </div>
                </div>
                <div class="mb-3 flex w-[11px] flex-col items-center gap-[5px] py-1">
                    <svg class="h-1 w-2 shrink-0 rotate-180"><use href="#down"/></svg>
                    <div class="w-[9px] flex-1 rounded-sm bg-[#5c5c5c]"></div>
                    <svg class="h-1 w-2 shrink-0"><use href="#down"/></svg>
                </div>
                <div class="w-[3px] bg-[#444]"></div>
            </div>
        </section>

        <!-- Viewport -->
        <section class="ml-[3px] flex min-w-0 flex-1 flex-col border-2 border-b-0 border-[#5f5f5f] outline-1 outline-[#363636]">
            <nav class="flex h-[19px] items-center gap-3 pl-2 whitespace-nowrap">
                <a href="#">视图</a>
                <a href="#">着色</a>
                <a href="#">照明</a>
                <a href="#">显示</a>
                <a href="#">渲染器</a>
                <a href="#">面板</a>
            </nav>
            <div class="flex h-[18px] shrink-0 items-center [&_button]:grid [&_button]:h-4 [&_button]:w-4 [&_button]:place-items-center [&>svg]:h-4 [&>svg]:w-[10px] [&>svg]:shrink-0">
                <svg><use href="#sep"/></svg>
                <div class="flex w-[116px] shrink-0 justify-between">
                    <button aria-label="选择摄影机"><svg class="h-[13px] w-[13px]"><use href="#cam"/></svg></button>
                    <button aria-label="锁定摄影机"><svg class="h-[14px] w-[14px]"><use href="#camL"/></svg></button>
                    <button aria-label="摄影机属性"><svg class="h-[14px] w-[14px]"><use href="#camG"/></svg></button>
                    <button aria-label="书签"><svg class="h-[14px] w-[14px]"><use href="#mark"/></svg></button>
                    <button aria-label="图像平面"><svg class="h-[14px] w-[14px]"><use href="#img"/></svg></button>
                    <button aria-label="二维平移/缩放"><svg class="h-[14px] w-[14px]"><use href="#pan"/></svg></button>
                    <button aria-label="油性铅笔"><svg class="h-[14px] w-[14px]"><use href="#brush"/></svg></button>
                </div>
                <svg><use href="#sep"/></svg>
                <div class="flex w-[116px] shrink-0 justify-between">
                    <button aria-label="栅格" class="bg-[#5285a6]"><svg class="h-4 w-4"><use href="#grid"/></svg></button>
                    <button aria-label="胶片门"><svg class="h-[14px] w-[14px]"><use href="#film"/></svg></button>
                    <button aria-label="分辨率门"><svg class="h-[14px] w-[14px]"><use href="#res"/></svg></button>
                    <button aria-label="门遮罩"><svg class="h-[14px] w-[14px]"><use href="#mask"/></svg></button>
                    <button aria-label="区域图"><svg class="h-[14px] w-[14px]"><use href="#chart"/></svg></button>
                    <button aria-label="安全动作"><svg class="h-[14px] w-[14px]"><use href="#safe"/></svg></button>
                    <button aria-label="安全标题"><svg class="h-[14px] w-[14px]"><use href="#title"/></svg></button>
                </div>
                <svg><use href="#sep"/></svg>
                <div class="flex w-[117px] shrink-0 justify-between">
                    <button aria-label="线框"><svg class="h-[14px] w-[14px]"><use href="#wire"/></svg></button>
                    <button aria-label="着色显示" class="bg-[#5285a6]"><svg class="h-[14px] w-[14px]"><use href="#shade"/></svg></button>
                    <button aria-label="默认材质"><svg class="h-[14px] w-[14px]"><use href="#half"/></svg></button>
                    <button aria-label="着色对象上的线框"><svg class="h-[14px] w-[14px]"><use href="#tex"/></svg></button>
                    <button aria-label="带纹理"><svg class="h-[14px] w-[14px]"><use href="#check"/></svg></button>
                    <button aria-label="使用所有灯光"><svg class="h-[14px] w-[14px]"><use href="#bulb"/></svg></button>
                    <button aria-label="阴影"><svg class="h-[14px] w-[14px]"><use href="#shadow"/></svg></button>
                </div>
                <svg><use href="#sep"/></svg>
                <div class="flex w-[66px] shrink-0 justify-between">
                    <button aria-label="环境光遮挡"><svg class="h-[14px] w-[14px]"><use href="#ao"/></svg></button>
                    <button aria-label="运动模糊"><svg class="h-[14px] w-[14px]"><use href="#blur"/></svg></button>
                    <button aria-label="抗锯齿"><svg class="h-[14px] w-[14px]"><use href="#aa"/></svg></button>
                    <button aria-label="景深" class="border border-[#383838]"><svg class="h-[14px] w-[14px]"><use href="#dof"/></svg></button>
                </div>
                <svg><use href="#sep"/></svg>
                <button aria-label="隔离选择"><svg class="h-[14px] w-[14px]"><use href="#iso"/></svg></button>
                <svg><use href="#sep"/></svg>
            </div>
            <div class="relative min-h-0 flex-1 bg-[#5d5d5d]">
                <svg class="h-full w-full" viewBox="224 172 492 347" fill="none">
                    <clipPath id="reflect"><path d="M433 345h76v27l-37 16-38-17z"/></clipPath>
                    <path id="ground" stroke="#3c3c3c" stroke-width=".6"/>
                    <path d="M412 367l38-13M532 369l-42-15" stroke="#222"/>
                    <path d="M433 345h76v27l-37 16-38-17z" fill="#5d5d5d"/>
                    <path id="groundLit" stroke="#a8a8a8" clip-path="url(#reflect)"/>
                    <path d="M433 322l38-12 38 12v24l-38 16-38-13z" fill="#868686"/>
                    <path d="M433 322l37 13v27l-37-13z" fill="#818181"/>
                    <path d="M433 322l38-12 38 12-39 13z" fill="#898989"/>
                    <path d="M375 276l97-20 95 21-100 28z" fill="#759183"/>
                    <path id="cloth" stroke="#48e3a0" stroke-width="1.200"/>
                    <path d="M467 297l13 4-13 4-12-4z" fill="#4ee05a"/>
                    <path d="M471 259V192" stroke="#c6c624" stroke-width="1.500"/>
                    <path d="M471 173l4.500 21h-9z" fill="#ff0"/>
                    <path d="M458 279l-46 11" stroke="#1c1cb8" stroke-width="1.500"/>
                    <path d="M389 295l18-8c4 1 4 6 1 8z" fill="#00f"/>
                    <path d="M483 280l46 11" stroke="#d02020" stroke-width="1.500"/>
                    <path d="M549 296l-17-8c-4 1-4 7-1 9z" fill="#f00"/>
                    <path d="M462 266h18v19h-18z" stroke="#5bc8e0"/>
                    <path d="M466 277c0-7 10-7 10 0zM471 272v5M468 274h6" stroke="#dcdc20" stroke-width="1.300"/>
                    <path d="M414 213l15-1v17l-13 2z" fill="#944b4b" stroke="#b03030"/>
                    <path d="M512 212l13 2-1 17-13-2z" fill="#4a4a94" stroke="#3030b0"/>
                    <path d="M247 499v-12" stroke="#18c018" stroke-width="1.500"/>
                    <path d="M247 499l-7 3-4-2" stroke="#2020c0" stroke-width="1.500"/>
                    <path d="M247 499l6 3 4-2" stroke="#c02020" stroke-width="1.500"/>
                    <g class="text-[9px] font-bold"><text x="244" y="485" fill="#18c018">y</text><text x="234" y="502" fill="#2020c0">z</text><text x="253" y="502" fill="#c02020">x</text></g>
                </svg>
                <p class="absolute inset-x-0 bottom-[2px] pr-3 text-center text-[9px] leading-4 font-bold text-[#eee]">persp</p>
            </div>
        </section>

        <!-- Attribute editor -->
        <section class="relative ml-[3px] flex w-[426px] shrink-0 border-l border-[#363636]">
            <div class="flex w-[408px] shrink-0 flex-col pl-[4px]">
                <nav class="mt-px flex h-[20px] items-center gap-3 pl-[6px]">
                    <a href="#">列表</a>
                    <a href="#">选定</a>
                    <a href="#">关注</a>
                    <a href="#">属性</a>
                    <a href="#">显示</a>
                    <a href="#">帮助</a>
                </nav>
                <div class="mt-4 flex h-[16px] items-center gap-[2px] pl-[3px] text-[#999] [&>button]:h-4 [&>button]:rounded-t-xs [&>button]:bg-[#353535] [&>button]:px-[9px]">
                    <button class="w-[33px] overflow-hidden !px-0"><span class="-ml-4">roup</span></button>
                    <button>lambert1</button>
                    <button>nCloth1</button>
                    <button>nClothShape1</button>
                    <button class="!bg-[#484848] font-semibold text-white">nucleus1</button>
                    <button class="mr-1">time1</button>
                    <svg class="h-2 w-[5px]" viewBox="0 0 5 8"><path d="M5 0v8L0 4z" fill="#ccc"/></svg>
                    <svg class="ml-[6px] h-2 w-[5px]" viewBox="0 0 5 8"><path d="M0 0v8l5-4z" fill="#888"/></svg>
                </div>
                <div class="mt-[9px] flex h-[56px] items-center">
                    <label for="node" class="w-[132px] text-right text-[#b5b5b5]">nucleus:</label>
                    <input id="node" class="ml-[5px] h-[19px] w-[135px] rounded-xs bg-[#272727] px-1 text-[#ccc]" value="nucleus1">
                    <div class="ml-[11px] flex w-4 flex-col gap-2">
                        <svg class="h-3 w-[15px]" viewBox="0 0 15 12"><path d="M4 1h10v10H5" fill="none" stroke="#999" stroke-width="1.300"/><path d="M0 8l4-4v4z" fill="#ddd"/></svg>
                        <svg class="h-3 w-[15px]" viewBox="0 0 15 12"><path d="M11 1H1v10h11M12 8v3" fill="none" stroke="#999" stroke-width="1.300"/><path d="M10 3v6l5-3z" fill="#ddd"/></svg>
                    </div>
                    <div class="ml-[9px] grid w-[63px] grid-cols-2 gap-x-[3px] gap-y-[1px] leading-[18px] text-[#ddd] [&>button]:h-[18px] [&>button]:bg-[#5c5c5c]">
                        <button class="col-span-2">聚焦</button>
                        <button class="col-span-2">预设</button>
                        <button>显示</button>
                        <button>隐藏</button>
                    </div>
                </div>

                <div class="mt-[11px] flex h-[174px] overflow-hidden pl-[8px]">
                    <div class="flex w-[374px] flex-col gap-1 bg-[#484848] text-[#bbb] [&_input[type=text]]:h-[18px] [&_input[type=text]]:w-[59px] [&_input[type=text]]:rounded-xs [&_input[type=text]]:bg-[#272727] [&_input[type=text]]:px-1 [&_label]:w-[127px] [&_label]:shrink-0 [&_label]:text-right">
                        <div class="flex shrink-0 items-center gap-1">
                            <label for="rx" class="mr-1">旋转轴</label>
                            <input id="rx" type="text" value="0.000">
                            <input type="text" value="0.000" aria-label="旋转轴 Y">
                            <input type="text" value="0.000" aria-label="旋转轴 Z">
                        </div>
                        <div class="relative flex h-[18px] shrink-0 items-center gap-1 pl-[135px]">
                            <input id="inherit" type="checkbox" checked class="h-[11px] w-[11px] appearance-none bg-[#272727]">
                            <svg class="pointer-events-none absolute left-[135px] h-[11px] w-[11px]" viewBox="0 0 11 11"><path d="M2 6l3 3 4-7" fill="none" stroke="#eee" stroke-width="2"/></svg>
                            <label for="inherit" class="!w-auto">继承变换</label>
                        </div>
                        <button class="flex h-[19px] shrink-0 items-center gap-[14px] bg-[#5c5c5c] pl-[6px] font-semibold text-[#ccc]"><svg class="h-[7px] w-3 text-white"><use href="#down"/></svg>重力和风</button>
                        <div class="flex shrink-0 items-center gap-1">
                            <label for="gravity" class="mr-1">重力</label>
                            <input id="gravity" type="text" value="9.800">
                            <input type="range" min="0" max="100" value="10" aria-label="重力滑块" class="h-[3px] w-[169px] appearance-none rounded-sm bg-[#272727] [&::-webkit-slider-thumb]:h-[13px] [&::-webkit-slider-thumb]:w-[6px] [&::-webkit-slider-thumb]:appearance-none [&::-webkit-slider-thumb]:rounded-xs [&::-webkit-slider-thumb]:bg-[#bbb]">
                        </div>
                        <div class="flex shrink-0 items-center gap-1">
                            <label for="gx" class="mr-1">重力方向</label>
                            <input id="gx" type="text" value="0.000">
                            <input type="text" value="-1.000" aria-label="重力方向 Y">
                            <input type="text" value="0.000" aria-label="重力方向 Z">
                        </div>
                        <div class="flex shrink-0 items-center gap-1 border-t border-[#3f3f3f] pt-px">
                            <label for="density" class="mr-1">空气密度</label>
                            <input id="density" type="text" value="1.000">
                            <input type="range" min="0" max="100" value="10" aria-label="空气密度滑块" class="h-[3px] w-[169px] appearance-none rounded-sm bg-[#272727] [&::-webkit-slider-thumb]:h-[13px] [&::-webkit-slider-thumb]:w-[6px] [&::-webkit-slider-thumb]:appearance-none [&::-webkit-slider-thumb]:rounded-xs [&::-webkit-slider-thumb]:bg-[#bbb]">
                        </div>
                        <div class="flex shrink-0 items-center gap-1">
                            <label for="wind" class="mr-1">风速</label>
                            <input id="wind" type="text" value="0.000">
                            <input type="range" min="0" max="100" value="0" aria-label="风速滑块" class="h-[3px] w-[169px] appearance-none rounded-sm bg-[#272727] [&::-webkit-slider-thumb]:h-[13px] [&::-webkit-slider-thumb]:w-[6px] [&::-webkit-slider-thumb]:appearance-none [&::-webkit-slider-thumb]:rounded-xs [&::-webkit-slider-thumb]:bg-[#bbb]">
                        </div>
                        <div class="flex shrink-0 items-center gap-1">
                            <label for="wx" class="mr-1">风向</label>
                            <input id="wx" type="text" value="1.000">
                            <input type="text" value="0.000" aria-label="风向 Y">
                            <input type="text" value="0.000" aria-label="风向 Z">
                        </div>
                    </div>
                    <div class="ml-[2px] flex w-[10px] flex-col items-center justify-between bg-[#363636] py-1">
                        <svg class="h-1 w-2 rotate-180"><use href="#down"/></svg>
                        <div class="mt-[34px] mb-auto h-[31px] w-[8px] rounded-sm bg-[#5c5c5c]"></div>
                        <svg class="h-1 w-2"><use href="#down"/></svg>
                    </div>
                </div>

                <div class="mx-auto mt-1 w-[131px] border-t border-dotted border-[#777]"></div>
                <label for="notes" class="mt-[2px] pl-[13px] font-semibold whitespace-pre text-[#bbb]">注释:  nucleus1</label>
                <textarea id="notes" class="mr-[5px] ml-[3px] min-h-0 flex-1 resize-none bg-[#272727]"></textarea>
                <div class="mt-1 mr-[2px] grid h-[21px] shrink-0 grid-cols-3 gap-[2px] text-[#ddd] [&>button]:bg-[#5c5c5c]">
                    <button>选择</button>
                    <button>加载属性</button>
                    <button>复制选项卡</button>
                </div>
            </div>

            <!-- Side tabs -->
            <div class="flex flex-1 flex-col gap-[2px] bg-[#3a3a3a] text-[#888] [&>button]:flex [&>button]:items-center [&>button]:justify-center [&>button]:bg-[#333] [&>button]:[text-orientation:sideways] [&>button]:[writing-mode:vertical-rl]">
                <button class="h-[97px]">通道盒/层编辑器</button>
                <button class="h-[71px]">建模工具包</button>
                <button class="h-[72px] !bg-[#444] font-semibold text-[#ddd]">属性编辑器</button>
                <div class="flex-1 bg-[#333]"></div>
            </div>

            <!-- Red pen marks -->
            <svg class="pointer-events-none absolute top-0 -left-[2px] h-[260px] w-[427px]" viewBox="720 133 427 260" fill="none" stroke="#ee1520" stroke-width="3.500" stroke-linecap="round" stroke-linejoin="round">
                <path d="M988 198l-8-5q-4-5-3-12 0-6 5-10 7-5 16-7l15-3 17-8 17-4q7 1 10 6 3 5 3 12l-3 25q-3 9-10 14l-27 4h-32l-21-16"/>
                <path d="M813 350h17l23 2 50-.5 24 3.500 40 5.500 60 .5 13-4 20-2 27-8q15-8 15-17-2-7-12-12-8-5-17-6l-18-2-5-5H903l-43-4h-72l-21 11-24 6-13 4q-9 5-9 11 3 6 12 10l15 8 22 3 27 5h61"/>
            </svg>
        </section>
    </main>

    <script>
        // Builds the lines of a grid laid over the quad left / top / right / bottom
        function gridPath(l, t, r, b, n) {
            const mix = (p, q, k) => [p[0] + (q[0] - p[0]) * k, p[1] + (q[1] - p[1]) * k];
            let d = "";
            for (let i = 0; i <= n; i++) {
                const k = i / n;
                d += `M${mix(l, t, k)}L${mix(b, r, k)}M${mix(l, b, k)}L${mix(t, r, k)}`;
            }
            return d;
        }
        document.getElementById("ground").setAttribute("d", gridPath([367, 346], [471, 319], [577, 348], [467, 396], 24));
        document.getElementById("groundLit").setAttribute("d", gridPath([367, 346], [471, 319], [577, 348], [467, 396], 18));
        document.getElementById("cloth").setAttribute("d", gridPath([375, 276], [472, 257], [567, 277], [467, 305], 10));
    </script>
</body>
</html>
